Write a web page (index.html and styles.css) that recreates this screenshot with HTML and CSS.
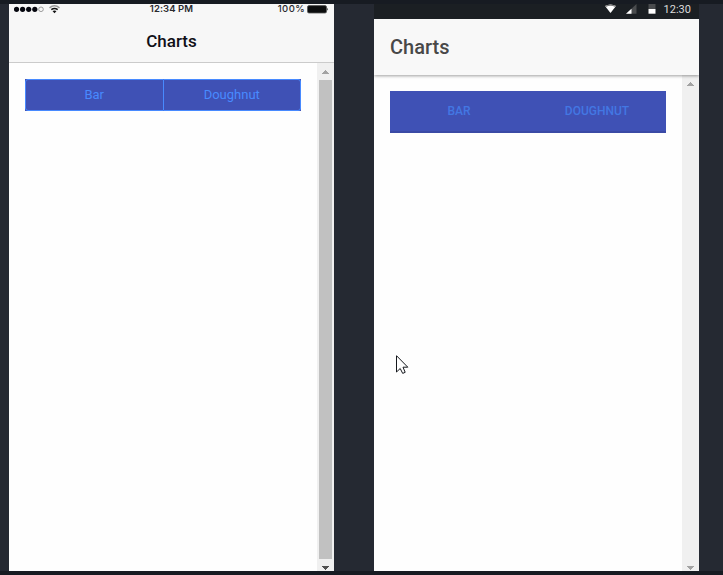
FILE: index.html
```html
<!DOCTYPE html>
<html lang="en">
<head>
<meta charset="utf-8">
<title>Charts</title>
<link rel="stylesheet" href="styles.css">
</head>
<body>
<main class="stage">
  <section class="phone">
    <header class="ios-header">
      <div class="ios-status">
        <svg class="ios-signal" width="48" height="12" viewBox="0 0 48 12">
          <g fill="#05060e"><circle cx="2.5" cy="5.3" r="2.6"/><circle cx="8.6" cy="5.3" r="2.6"/><circle cx="14.7" cy="5.3" r="2.6"/><circle cx="20.8" cy="5.3" r="2.6"/></g>
          <circle cx="27" cy="5.3" r="2.3" fill="none" stroke="#888" stroke-width=".8"/>
          <g fill="none" stroke-width="1.5"><path d="M35.5 3.8Q40.5 -.2 45.5 3.8" stroke="#999"/><path d="M37.3 5.7Q40.5 3.3 43.7 5.7" stroke="#111"/></g>
          <path d="M38.5 7Q40.5 5.9 42.5 7L40.5 9.2Z" fill="#111"/>
        </svg>
        <span class="ios-time">12:34 PM</span>
        <span class="ios-battery"><span>100%</span>
          <svg width="22" height="9" viewBox="0 0 22 9"><rect x=".5" y=".6" width="19" height="7.4" rx="1.5" fill="#0b0c0d" stroke="#555" stroke-width=".8"/><path d="M20.2 2.8Q22 4.3 20.2 5.8Z" fill="#333"/></svg>
        </span>
      </div>
      <h1 class="ios-title">Charts</h1>
    </header>
    <div class="view">
      <div class="content"><div class="segment ios-segment"><button>Bar</button><button>Doughnut</button></div></div>
      <div class="scrollbar">
        <svg class="arrow" width="17" height="17" viewBox="0 0 17 17" shape-rendering="crispEdges"><path d="M5 11V10H6V9H7V8H8V7H9V8H10V9H11V10H12V11Z" fill="#a3a3a3"/></svg>
        <div class="thumb"></div>
        <svg class="arrow end" width="17" height="12" viewBox="0 0 17 12" shape-rendering="crispEdges"><path d="M5 7H12V8H11V9H10V10H9V11H8V10H7V9H6V8H5Z" fill="#505050"/></svg>
      </div>
    </div>
  </section>
  <section class="phone">
    <div class="md-status">
      <svg width="52" height="11" viewBox="0 0 52 11">
        <path d="M0 2Q5.5 -1.2 11 2L5.5 9Z" fill="#fff"/><path d="M0 2Q5.5 -1.2 11 2L10.2 3Q5.5 .3 .8 3Z" fill="#777"/>
        <path d="M21 9.7L31.5 0V9.7Z" fill="#4a4c4e"/><path d="M21 9.7L26.5 4.7V9.7Z" fill="#fff"/>
        <path d="M43.5 0H50.5V5H43.5Z" fill="#4a4c4e"/><path d="M43.5 5H50.5V9.7H43.5Z" fill="#fff"/>
      </svg>
      <span class="md-time">12:30</span>
    </div>
    <header class="md-header"><h1 class="md-title">Charts</h1></header>
    <div class="view">
      <div class="content"><div class="segment md-segment"><button>BAR</button><button>DOUGHNUT</button></div></div>
      <div class="scrollbar">
        <svg class="arrow" width="17" height="17" viewBox="0 0 17 17" shape-rendering="crispEdges"><path d="M5 11V10H6V9H7V8H8V7H9V8H10V9H11V10H12V11Z" fill="#a3a3a3"/></svg>
        <svg class="arrow end" width="17" height="12" viewBox="0 0 17 12" shape-rendering="crispEdges"><path d="M5 7H12V8H11V9H10V10H9V11H8V10H7V9H6V8H5Z" fill="#a3a3a3"/></svg>
      </div>
    </div>
  </section>
</main>
<svg class="cursor" width="13" height="20" viewBox="0 0 13 20"><path d="M.5 .7V17L4.2 13.5L6.7 18.4L9.2 17.3L7 12.2H11.8Z" fill="#fff" stroke="#15181d"/></svg>
</body>
</html>
```
FILE: styles.css
```css
* { box-sizing: border-box; }
body {
  margin: 0;
  width: 723px;
  height: 575px;
  overflow: hidden;
  font-family: Roboto, sans-serif;
  background: #252932;
}
.stage {
  display: flex;
  gap: 40px;
  height: 575px;
  padding-left: 9px;
  border-top: 4px solid #171b22;
  border-bottom: 4px solid #171b22;
}
.phone {
  display: flex;
  flex-direction: column;
  width: 325px;
  background: #fefefe;
}
h1 { margin: 0; font-weight: 500; }
.ios-header {
  height: 59px;
  background: #f7f7f7;
  border-bottom: 1px solid #cbcbcb;
}
.ios-status {
  display: grid;
  grid-template-columns: 1fr auto 1fr;
  height: 15px;
  padding: 0 5px;
  font: 600 9.5px/10px Inter, sans-serif;
  color: #2a2a2e;
}
.ios-time { letter-spacing: 0.1px; }
.ios-battery { display: flex; justify-content: flex-end; gap: 2px; font-weight: 500; letter-spacing: 0.4px; }
.ios-battery svg { margin-top: 1px; }
.ios-title {
  font-size: 17px;
  line-height: 44px;
  text-align: center;
  color: #101018;
}
.view { display: flex; flex: 1; min-height: 0; }
.content { flex: 1; padding: 16px; }
.segment { display: flex; background: #3f51b5; }
.segment button {
  flex: 1 1 0;
  padding: 0;
  border: 0;
  background: none;
  font-family: inherit;
}
.ios-segment { height: 32px; }
.ios-segment button {
  padding-bottom: 2px;
  border: 1px solid #488aff;
  color: #488aff;
  font-size: 13px;
}
.ios-segment button:first-child { border-radius: 3px 0 0 3px; }
.ios-segment button:last-child { border-left: 0; border-radius: 0 3px 3px 0; }
.md-segment { height: 42px; }
.md-segment button {
  border-bottom: 2px solid #3a4aa5;
  color: #4377e3;
  font-size: 12px;
  font-weight: 500;
}
.scrollbar {
  display: flex;
  flex-direction: column;
  width: 17px;
  background: #f0f0f0;
}
.arrow { display: block; flex: none; }
.end { margin-top: auto; }
.thumb { flex: 1; margin: 0 2px; background: #c1c1c1; }
.md-status {
  display: flex;
  justify-content: flex-end;
  height: 15px;
  padding-right: 8px;
  gap: 7px;
  background: #1b1f23;
}
.md-time { font-size: 11px; line-height: 11px; color: #dcdcdc; }
.md-header {
  position: relative;
  height: 56px;
  padding-left: 16px;
  background: #f8f8f8;
  box-shadow: 0 1px 3px rgba(0, 0, 0, 0.38);
  clip-path: inset(0 0 -5px 0);
}
.md-title { font-size: 20px; line-height: 56px; color: #484848; }
.cursor { position: absolute; left: 396px; top: 355px; }
```
